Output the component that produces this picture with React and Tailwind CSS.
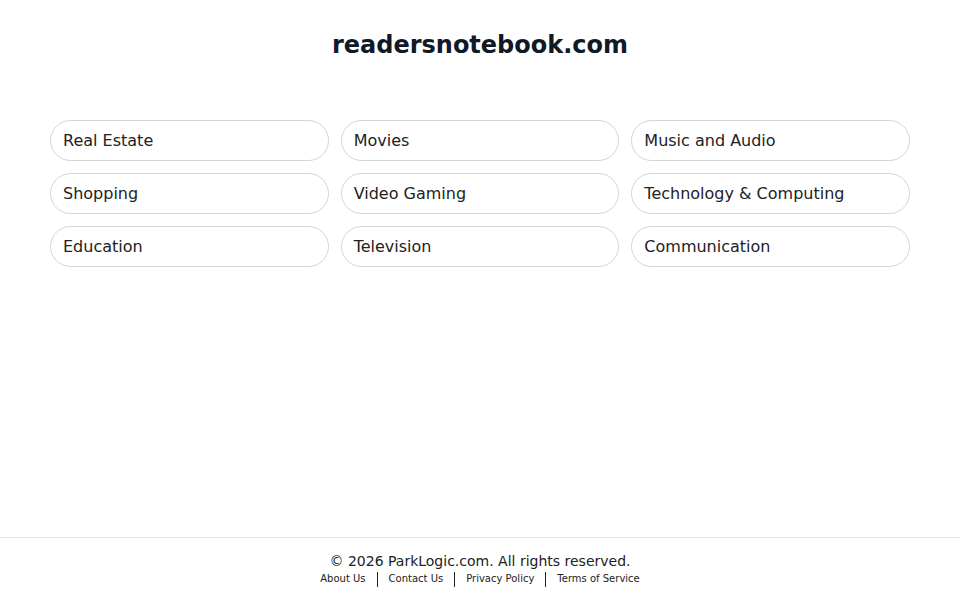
import React from 'react';

const categories = [
  'Real Estate',
  'Movies',
  'Music and Audio',
  'Shopping',
  'Video Gaming',
  'Technology & Computing',
  'Education',
  'Television',
  'Communication',
];

const links = ['About Us', 'Contact Us', 'Privacy Policy', 'Terms of Service'];

const App = () => {
  return (
    <div
      className="min-h-screen flex flex-col bg-white text-[#1f2937]"
      style={{ fontFamily: '"DejaVu Sans", sans-serif' }}
    >
      {/* Header */}
      <header className="pt-[29px] pb-[59px] text-center">
        <h1 className="text-2xl leading-8 font-bold text-[#111827]">readersnotebook.com</h1>
      </header>

      {/* Categories */}
      <main className="flex-1 px-[50px]">
        <div className="grid grid-cols-3 gap-3">
          {categories.map((c) => (
            <a
              key={c}
              href="#"
              className="h-[41px] flex items-center px-3 border border-[#d4d4d8] rounded-full text-base text-[#222]"
            >
              {c}
            </a>
          ))}
        </div>
      </main>

      {/* Footer */}
      <footer className="border-t border-[#e5e7eb] pt-[13px] pb-[13px] text-center">
        <p className="text-sm leading-5 text-[#222]">© 2026 ParkLogic.com. All rights reserved.</p>
        <div className="flex justify-center items-center text-[10px] leading-4 text-[#222]">
          {links.map((l, i) => (
            <React.Fragment key={l}>
              {i > 0 && <span className="mx-[11px] w-px h-[15px] bg-[#222]" />}
              <a href="#">{l}</a>
            </React.Fragment>
          ))}
        </div>
      </footer>
    </div>
  );
};

export default App;
